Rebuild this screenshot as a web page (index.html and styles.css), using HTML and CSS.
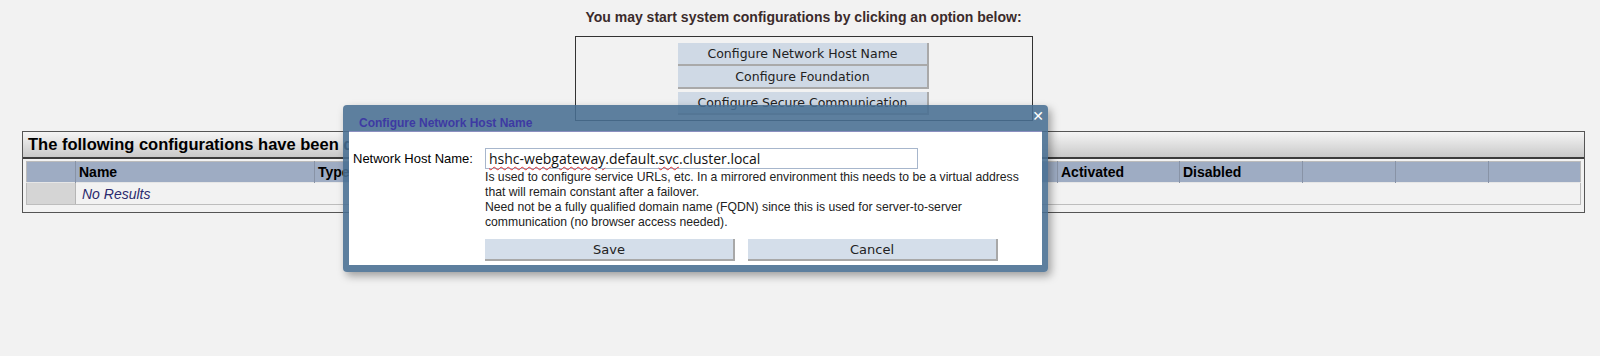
FILE: index.html
```html
<!DOCTYPE html>
<html lang="en">
<head>
  <meta charset="UTF-8">
  <meta name="viewport" content="width=device-width, initial-scale=1.0">
  <title>System Configuration</title>
  <link rel="stylesheet" href="styles.css">
</head>
<body>
  <div class="page">
    <p class="intro">You may start system configurations by clicking an option below:</p>
    <div class="options">
      <button class="option">Configure Network Host Name</button>
      <button class="option">Configure Foundation</button>
      <button class="option option-last">Configure Secure Communication</button>
    </div>

    <div class="panel">
      <div class="panel-title">The following configurations have been defined:</div>
      <table class="results">
        <colgroup>
          <col class="c-sel">
          <col class="c-name">
          <col class="c-type">
          <col class="c-desc">
          <col class="c-ver">
          <col class="c-act">
          <col class="c-dis">
          <col class="c-x1">
          <col class="c-x2">
          <col>
        </colgroup>
        <thead>
          <tr>
            <th></th>
            <th>Name</th>
            <th>Type</th>
            <th>Description</th>
            <th>Version</th>
            <th>Activated</th>
            <th>Disabled</th>
            <th></th>
            <th></th>
            <th></th>
          </tr>
        </thead>
        <tbody>
          <tr>
            <td class="sel"></td>
            <td class="empty" colspan="9">No Results</td>
          </tr>
        </tbody>
      </table>
    </div>
  </div>

  <!-- modal dialog -->
  <div class="dialog">
    <div class="dialog-head">
      <span class="dialog-title">Configure Network Host Name</span>
      <span class="dialog-close">&#x2715;</span>
    </div>
    <div class="dialog-body">
      <div class="field">
        <label class="field-label">Network Host Name:</label>
        <div class="field-main">
          <div class="text-input"><span class="typo">hshc-webgateway</span>.default.<span class="typo">svc</span>.cluster.local</div>
          <div class="hint">
            Is used to configure service URLs, etc. In a mirrored environment this needs to be a virtual address<br>
            that will remain constant after a failover.<br>
            Need not be a fully qualified domain name (FQDN) since this is used for server-to-server<br>
            communication (no browser access needed).
          </div>
          <div class="actions">
            <button class="btn">Save</button>
            <button class="btn">Cancel</button>
          </div>
        </div>
      </div>
    </div>
  </div>
</body>
</html>
```

FILE: styles.css
```css
/* page */
body {
  margin: 0;
  background: #f2f2f2;
  font-family: "Liberation Sans", Arial, sans-serif;
  color: #000;
}

.page {
  padding: 0 15px 0 22px;
}

.intro {
  margin: 0;
  padding-top: 9px;
  height: 27px;
  text-align: center;
  font-size: 14px;
  font-weight: bold;
  color: #3b2b2b;
}

/* option box */
.options {
  width: 456px;
  margin: 0 auto;
  border: 1px solid #333;
  padding: 6px 0 5px;
  display: flex;
  flex-direction: column;
  align-items: center;
  gap: 0;
}

.option {
  width: 251px;
  height: 23px;
  padding: 0;
  background: #cfd9e5;
  border: none;
  border-bottom: 2px solid #a9a9a9;
  border-right: 2px solid #a9a9a9;
  font-family: "DejaVu Sans", Tahoma, sans-serif;
  font-size: 12.5px;
  color: #222;
}

.option-last {
  margin-top: 3px;
}

/* results panel */
.panel {
  margin-top: 10px;
  border: 1px solid #555;
  padding-bottom: 7px;
}

.panel-title {
  height: 25px;
  padding-left: 5px;
  line-height: 25px;
  font-size: 16.5px;
  font-weight: bold;
  background: linear-gradient(#f5f5f5, #c9c9c9);
  border-bottom: 2px solid #3c3c3c;
  white-space: nowrap;
  overflow: hidden;
}

.results {
  width: calc(100% - 6px);
  margin: 2px 0 0 3px;
  border-collapse: collapse;
  table-layout: fixed;
  border: 1px solid #bbb;
}

.c-sel { width: 49px; }
.c-name { width: 239px; }
.c-type { width: 250px; }
.c-desc { width: 250px; }
.c-ver { width: 243px; }
.c-act { width: 122px; }
.c-dis { width: 123px; }
.c-x1 { width: 93px; }
.c-x2 { width: 93px; }

.results th {
  height: 20px;
  padding: 0 3px;
  background: #9eacc3;
  border-left: 1px solid #8893a6;
  text-align: left;
  font-size: 14px;
  font-weight: bold;
  white-space: nowrap;
  overflow: hidden;
}

.results th:first-child {
  border-left: none;
}

.results td {
  height: 21px;
  padding: 0 6px;
  border-top: 1px solid #e6e6e6;
  border-bottom: 1px solid #bdbdbd;
}

.results td.sel {
  background: #d5d5d5;
  border-right: 1px solid #b5b5b5;
}

.results td.empty {
  font-size: 14px;
  font-style: italic;
  color: #2b2b6e;
}

/* dialog */
.dialog {
  position: absolute;
  left: 343px;
  top: 105px;
  width: 693px;
  padding: 0 6px 7px;
  background: rgba(72, 110, 146, 0.88);
  border-radius: 4px;
  box-shadow: 3px 4px 8px rgba(0, 0, 0, 0.35);
}

.dialog-head {
  height: 26px;
  display: flex;
  justify-content: space-between;
  align-items: center;
  padding-left: 10px;
}

.dialog-title {
  margin-top: 9px;
  font-size: 12px;
  font-weight: bold;
  color: #3d3aa3;
}

.dialog-close {
  margin-top: -4px;
  margin-right: -2px;
  font-family: "DejaVu Sans", sans-serif;
  font-size: 14px;
  font-weight: bold;
  color: #fff;
}

.dialog-body {
  background: #fff;
  border-top: 1px solid #8b8fc0;
  padding: 16px 0 4px 4px;
}

.field {
  display: flex;
}

.field-label {
  width: 132px;
  padding-top: 3px;
  font-size: 13px;
}

.text-input {
  width: 425px;
  height: 19px;
  padding: 0 3px;
  border: 1px solid #a7b6cc;
  font-family: "Open Sans", sans-serif;
  font-size: 14px;
  line-height: 19px;
  color: #111;
}

.typo {
  text-decoration: underline wavy #e03030;
  text-decoration-thickness: 1px;
  text-underline-offset: 2px;
}

.hint {
  margin-top: 1px;
  font-size: 12.2px;
  line-height: 15px;
  color: #222;
}

.actions {
  display: flex;
  gap: 13px;
  margin-top: 9px;
}

.btn {
  width: 250px;
  height: 22px;
  padding: 0;
  background: #d4deea;
  border: none;
  border-bottom: 2px solid #a8a8a8;
  border-right: 2px solid #a8a8a8;
  font-family: "DejaVu Sans", Tahoma, sans-serif;
  font-size: 13px;
  color: #222;
}
```
